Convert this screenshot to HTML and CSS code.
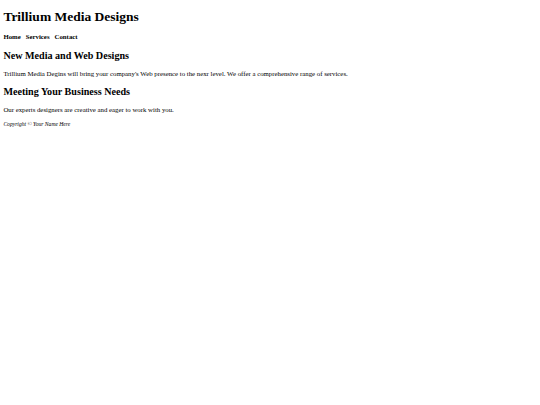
FILE: index.html
```html
<!DOCTYPE html>
<html lang="en">
<head>
<meta charset="utf-8">
<title>Trillium Media Designs</title>
<link rel="stylesheet" href="styles.css">
</head>
<body>
<header class="site-header">
<h1 class="site-title">Trillium Media Designs</h1>
<nav class="site-nav"><a href="#">Home</a><a href="#">Services</a><a href="#">Contact</a></nav>
</header>
<main class="content">
<h2 class="section-title">New Media and Web Designs</h2>
<p class="text">Trillium Media Degins will bring your company's Web presence to the nexr level. We offer a comprehensive range of services.</p>
<h2 class="section-title">Meeting Your Business Needs</h2>
<p class="text">Our experts designers are creative and eager to work with you.</p>
</main>
<footer class="site-footer">Copyright &copy; Your Name Here</footer>
</body>
</html>
```
FILE: styles.css
```css
html { background: #fff; }
body {
  margin: 3.375px;
  font-family: "Liberation Serif", "Times New Roman", serif;
  font-size: 6.8px;
  color: #000;
}
.site-title {
  font-size: 13.5px;
  font-weight: bold;
  margin: 6px 0 8px;
}
.site-nav { padding-bottom: 1px; }
.site-nav a {
  color: #000;
  font-weight: bold;
  text-decoration: none;
  margin-right: 5px;
}
.section-title {
  font-size: 10.125px;
  font-weight: bold;
  margin: 8.4px 0 9.4px;
}
.text { margin: 9.4px 0 6.75px; }
.site-footer {
  font-size: 5.6px;
  font-style: italic;
  margin: 8px 0 0;
}
```
